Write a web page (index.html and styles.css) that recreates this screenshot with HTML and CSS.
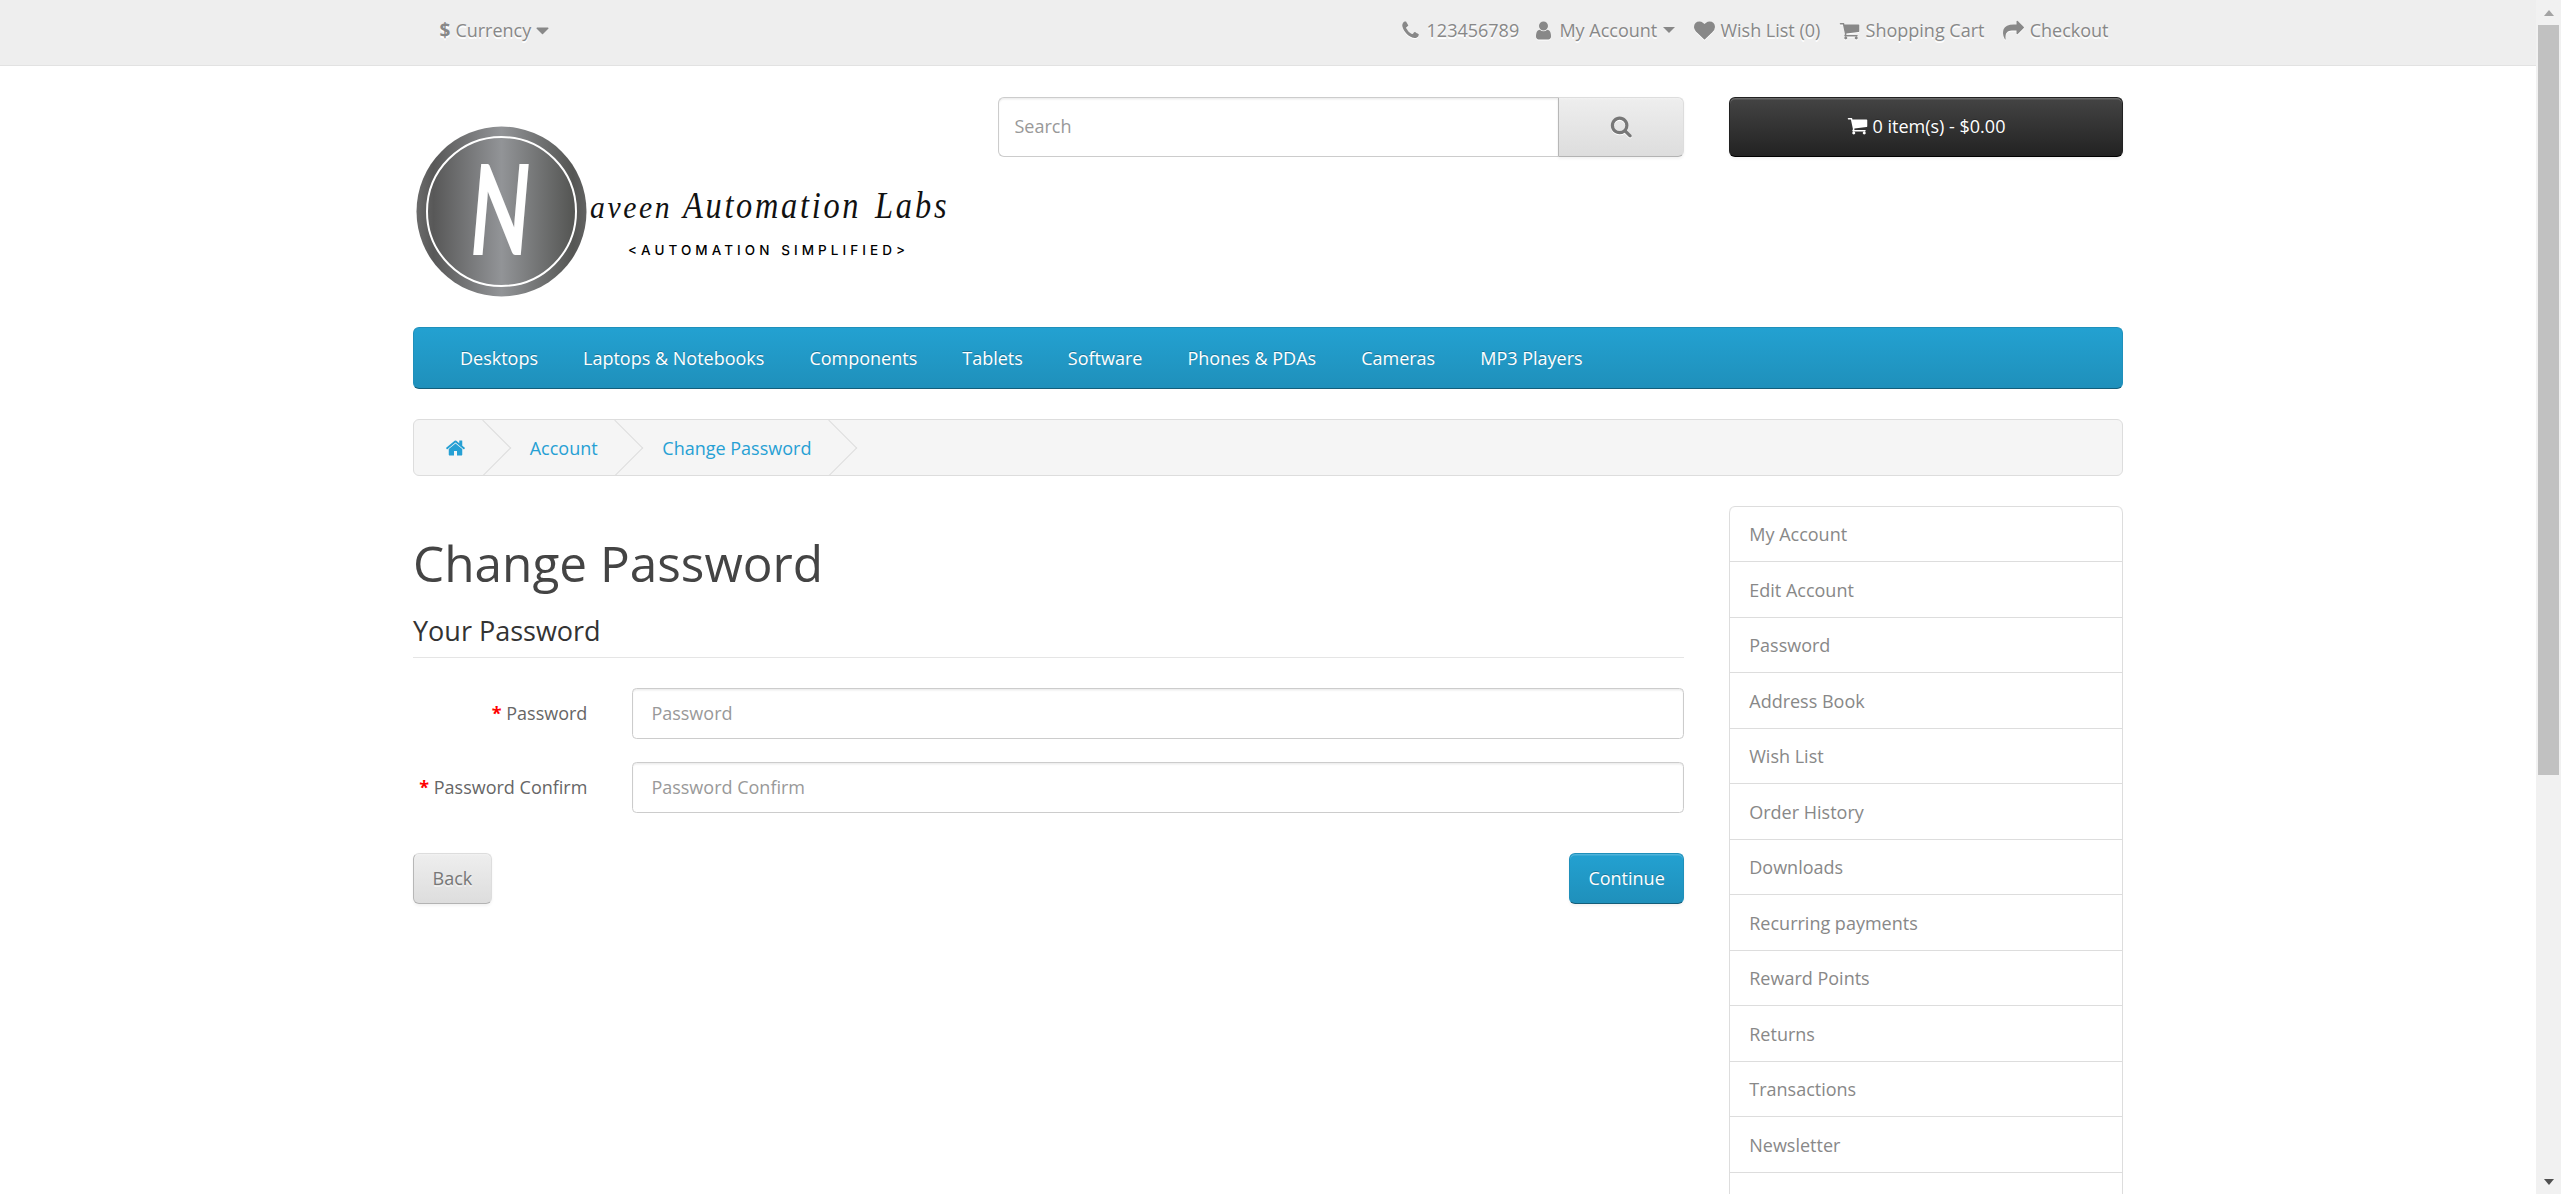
FILE: index.html
```html
<!DOCTYPE html>
<html lang="en">
<head>
<meta charset="utf-8">
<title>Change Password</title>
<link rel="stylesheet" href="styles.css">
</head>
<body>
<div class="page">
  <div class="viewport">
    <nav class="top">
      <div class="wrap top-inner">
        <div class="currency"><strong>$</strong> <span>Currency</span>
          <svg class="caret-fa" viewBox="0 0 1792 1792"><path d="M1408 704q0 26-19 45l-448 448q-19 19-45 19t-45-19l-448-448q-19-19-19-45t19-45 45-19h896q26 0 45 19t19 45z"/></svg>
        </div>
        <ul class="top-links">
          <li class="phone"><span class="ico"><svg viewBox="0 0 1792 1792"><path d="M1600 1240q0 27-10 70.5t-21 68.5q-21 50-122 106-94 51-186 51-27 0-53-3.5t-57.5-12.5-47-14.5-55.5-20.5-49-18q-98-35-175-83-127-79-264-216t-216-264q-48-77-83-175-3-9-18-49t-20.5-55.5-14.5-47-12.5-57.5-3.5-53q0-92 51-186 56-101 106-122 25-11 68.5-21t70.5-10q14 0 21 3 18 6 53 76 11 19 30 54t35 63.5 31 53.5q3 4 17.5 25t21.5 35.5 7 28.5q0 20-28.5 50t-62 55-62 53-28.5 46q0 9 5 22.5t8.5 20.5 14 24 11.5 19q76 137 174 235t235 174q2 1 19 11.5t24 14 20.5 8.5 22.5 5q18 0 46-28.5t53-62 55-62 50-28.5q14 0 28.5 7t35.5 21.5 25 17.5q25 15 53.5 31t63.5 35 54 30q70 35 76 53 3 7 3 21z"/></svg></span>123456789</li>
          <li><span class="ico"><svg viewBox="0 0 1792 1792"><path d="M1536 1399q0 109-62.5 187t-150.5 78h-854q-88 0-150.5-78t-62.5-187q0-85 8.5-160.5t31.5-152 58.5-131 94-89 134.5-34.5q131 128 313 128t313-128q76 0 134.5 34.5t94 89 58.5 131 31.5 152 8.5 160.5zm-256-887q0 159-112.5 271.5t-271.5 112.5-271.5-112.5-112.5-271.5 112.5-271.5 271.5-112.5 271.5 112.5 112.5 271.5z"/></svg></span>My Account<i class="caret"></i></li>
          <li><span class="ico"><svg viewBox="0 0 1792 1792"><path d="M896 1664q-26 0-44-18l-624-602q-10-8-27.5-26t-55.5-65.5-68-97.5-53.5-121-23.5-138q0-220 127-344t351-124q62 0 126.5 21.5t120 58 95.5 68.5 76 68q36-36 76-68t95.5-68.5 120-58 126.5-21.5q224 0 351 124t127 344q0 221-229 450l-623 600q-18 18-44 18z"/></svg></span>Wish List (0)</li>
          <li><span class="ico"><svg viewBox="0 0 1792 1792"><path d="M704 1536q0 52-38 90t-90 38-90-38-38-90 38-90 90-38 90 38 38 90zm896 0q0 52-38 90t-90 38-90-38-38-90 38-90 90-38 90 38 38 90zm128-1088v512q0 24-16.5 42.5t-40.5 21.5l-1044 122q13 60 13 70 0 16-24 64h920q26 0 45 19t19 45-19 45-45 19h-1024q-26 0-45-19t-19-45q0-11 8-31.5t16-36 21.5-40 15.5-29.5l-177-823h-204q-26 0-45-19t-19-45 19-45 45-19h256q16 0 28.5 6.5t19.5 15.5 13 24.5 8 26 5.5 29.5 4.5 26h1201q26 0 45 19t19 45z"/></svg></span>Shopping Cart</li>
          <li><span class="ico"><svg viewBox="0 0 1792 1792"><path d="M1792 640q0 26-19 45l-512 512q-19 19-45 19t-45-19-19-45v-256h-224q-98 0-175.5 6t-154 21.5-133 42.5-105.5 69.5-80 101-48.5 138.5-17.5 181q0 55 5 123 0 6 2.5 23.5t2.5 26.5q0 15-8.5 25t-23.5 10q-16 0-28-17-7-9-13-22t-13.5-30-10.5-24q-127-285-127-451 0-199 53-333 162-403 875-403h224v-256q0-26 19-45t45-19 45 19l512 512q19 19 19 45z"/></svg></span>Checkout</li>
        </ul>
      </div>
    </nav>

    <header class="wrap header">
      <svg class="logo" viewBox="0 0 540 215" role="img" aria-label="Naveen Automation Labs">
        <defs>
          <linearGradient id="metal" x1="0" x2="1" y1="0" y2="0">
            <stop offset="0" stop-color="#6b6b6b"/>
            <stop offset="0.1" stop-color="#585858"/>
            <stop offset="0.5" stop-color="#929497"/>
            <stop offset="0.92" stop-color="#555654"/>
            <stop offset="1" stop-color="#626262"/>
          </linearGradient>
        </defs>
        <circle cx="88.5" cy="115.5" r="85" fill="url(#metal)"/>
        <circle cx="88.5" cy="115.5" r="74.5" fill="none" stroke="#fff" stroke-width="2"/>
        <text class="logo-n" transform="translate(70 159) skewX(-5)" textLength="60" lengthAdjust="spacingAndGlyphs" x="-16">N</text>
        <text class="logo-script" transform="translate(177 122) scale(1.35 1.45)" textLength="59" lengthAdjust="spacing">aveen</text>
        <text class="logo-script logo-tall" transform="translate(270 122) scale(1.35 1.6)" textLength="130" lengthAdjust="spacing">Automation</text>
        <text class="logo-script logo-tall" transform="translate(462 122) scale(1.35 1.6)" textLength="53" lengthAdjust="spacing">Labs</text>
        <text class="logo-sub" x="215" y="159" textLength="277" lengthAdjust="spacing">&lt;AUTOMATION SIMPLIFIED&gt;</text>
      </svg>
      <div class="search">
        <input class="search-input" type="text" placeholder="Search">
        <button class="btn btn-default search-btn" type="button"><svg viewBox="0 0 1792 1792"><path d="M1216 832q0-185-131.5-316.5t-316.5-131.5-316.5 131.5-131.5 316.5 131.5 316.5 316.5 131.5 316.5-131.5 131.5-316.5zm512 832q0 52-38 90t-90 38q-54 0-90-38l-343-342q-179 124-399 124-143 0-273.5-55.5t-225-150-150-225-55.5-273.5 55.5-273.5 150-225 225-150 273.5-55.5 273.5 55.5 225 150 150 225 55.5 273.5q0 220-124 399l343 343q37 37 37 90z"/></svg></button>
      </div>
      <button class="btn btn-inverse cart" type="button"><svg viewBox="0 0 1792 1792"><path d="M704 1536q0 52-38 90t-90 38-90-38-38-90 38-90 90-38 90 38 38 90zm896 0q0 52-38 90t-90 38-90-38-38-90 38-90 90-38 90 38 38 90zm128-1088v512q0 24-16.5 42.5t-40.5 21.5l-1044 122q13 60 13 70 0 16-24 64h920q26 0 45 19t19 45-19 45-45 19h-1024q-26 0-45-19t-19-45q0-11 8-31.5t16-36 21.5-40 15.5-29.5l-177-823h-204q-26 0-45-19t-19-45 19-45 45-19h256q16 0 28.5 6.5t19.5 15.5 13 24.5 8 26 5.5 29.5 4.5 26h1201q26 0 45 19t19 45z"/></svg>0 item(s) - $0.00</button>
    </header>

    <nav class="wrap menu">
      <a href="#">Desktops</a>
      <a href="#">Laptops &amp; Notebooks</a>
      <a href="#">Components</a>
      <a href="#">Tablets</a>
      <a href="#">Software</a>
      <a href="#">Phones &amp; PDAs</a>
      <a href="#">Cameras</a>
      <a href="#">MP3 Players</a>
    </nav>

    <ul class="wrap breadcrumb">
      <li><a href="#" aria-label="Home"><svg class="home" viewBox="0 0 1792 1792"><path d="M1472 992v480q0 26-19 45t-45 19h-384v-384h-256v384h-384q-26 0-45-19t-19-45v-480q0-1 .5-3t.5-3l575-474 575 474q1 2 1 6zm223-69l-62 74q-8 9-21 11h-3q-13 0-21-7l-692-577-692 577q-12 8-24 7-13-2-21-11l-62-74q-8-10-7-23.5t11-21.5l719-599q32-26 76-26t76 26l244 204v-195q0-14 9-23t23-9h192q14 0 23 9t9 23v408l219 182q10 8 11 21.5t-7 23.5z"/></svg></a></li>
      <li><a href="#">Account</a></li>
      <li><a href="#">Change Password</a></li>
    </ul>

    <main class="wrap main">
      <section class="content">
        <h1>Change Password</h1>
        <form>
          <div class="legend">Your Password</div>
          <div class="form-group">
            <label class="control-label" for="pw">Password</label>
            <input class="form-control" id="pw" type="password" placeholder="Password">
          </div>
          <div class="form-group">
            <label class="control-label" for="pwc">Password Confirm</label>
            <input class="form-control" id="pwc" type="password" placeholder="Password Confirm">
          </div>
          <div class="buttons">
            <a class="btn btn-default" href="#">Back</a>
            <button class="btn btn-primary" type="button">Continue</button>
          </div>
        </form>
      </section>
      <aside class="list-group">
        <a href="#">My Account</a>
        <a href="#">Edit Account</a>
        <a href="#">Password</a>
        <a href="#">Address Book</a>
        <a href="#">Wish List</a>
        <a href="#">Order History</a>
        <a href="#">Downloads</a>
        <a href="#">Recurring payments</a>
        <a href="#">Reward Points</a>
        <a href="#">Returns</a>
        <a href="#">Transactions</a>
        <a href="#">Newsletter</a>
        <a class="list-blank" href="#" aria-label="Logout"></a>
      </aside>
    </main>
  </div>
  <div class="scrollbar" aria-hidden="true">
    <div class="sb-btn"><i class="sb-up"></i></div>
    <div class="sb-thumb"></div>
    <div class="sb-track"></div>
    <div class="sb-btn"><i class="sb-down"></i></div>
  </div>
</div>
</body>
</html>
```

FILE: styles.css
```css
* { box-sizing: border-box; }
html, body { margin: 0; height: 100%; overflow: hidden; }
body {
  font-family: "Open Sans", sans-serif;
  font-size: 18px;
  line-height: 30px;
  color: #666;
  background: #fff;
}
a { color: #26a0d4; text-decoration: none; }
ul { list-style: none; margin: 0; padding: 0; }

.page { display: flex; height: 1194px; }
.viewport { flex: 1; min-width: 0; overflow: hidden; }
.wrap { width: 1710px; margin-left: auto; margin-right: auto; }

/* top bar */
.top {
  height: 66px;
  background: #eee;
  border-bottom: 1px solid #e2e2e2;
  margin-bottom: 30.5px;
}
.top-inner {
  height: 65px;
  display: flex;
  align-items: center;
  justify-content: space-between;
  padding: 0 14.5px 5px 26.5px;
  color: #888;
  text-shadow: 0 1.5px 0 #fff;
}
.currency { display: flex; align-items: center; white-space: pre; }
.currency strong { font-size: 19px; }
.currency span { margin-left: 5px; }
.caret-fa { width: 21px; height: 21px; fill: #888; margin-left: 1px; }
.top-links { display: flex; gap: 18px; }
.top-links li { display: flex; align-items: center; white-space: nowrap; }
.top-links .phone { margin-right: -5px; }
.ico { display: flex; justify-content: center; width: 22.5px; margin-right: 4.68px; }
.ico svg { width: 21px; height: 21px; fill: #888; filter: drop-shadow(0 1px 0 #fff); }
.caret {
  width: 0; height: 0;
  margin-left: 6px;
  border-top: 6px solid #888;
  border-left: 6px solid transparent;
  border-right: 6px solid transparent;
}

/* header */
.header {
  display: grid;
  grid-template-columns: 540px 686.25px 393.75px;
  column-gap: 45px;
  align-items: start;
  height: 230px;
}
.logo { display: block; width: 540px; height: 215px; margin-top: -0.5px; }
.logo-n { font-family: "Lato", sans-serif; font-weight: 700; font-size: 126px; fill: #fff; }
.logo-script { font-family: "Liberation Serif", serif; font-style: italic; font-size: 22px; fill: #111; }
.logo-tall { font-size: 24px; }
.logo-sub { font-family: "Inter", sans-serif; font-weight: 500; font-size: 13.5px; fill: #000; }

.search { display: flex; height: 60px; }
.search-input {
  flex: 1; min-width: 0;
  height: 60px;
  padding: 0 15px 2px 15.5px;
  font: 18px/30px "Open Sans", sans-serif;
  color: #555;
  border: 1px solid #ccc;
  border-right: 0;
  border-radius: 6px 0 0 6px;
  box-shadow: inset 0 1.5px 1.5px rgba(0,0,0,.075);
  outline: 0;
}
input::placeholder { color: #999; opacity: 1; }

.btn {
  display: inline-flex;
  align-items: center;
  justify-content: center;
  height: 51px;
  padding: 0 18.5px;
  font: 18px/26px "Open Sans", sans-serif;
  border: 1px solid #ccc;
  border-radius: 6px;
  box-shadow: inset 0 1.5px 0 rgba(255,255,255,.2), 0 1.5px 3px rgba(0,0,0,.05);
}
.btn-default {
  color: #777;
  text-shadow: 0 1.5px 0 rgba(255,255,255,.5);
  background: linear-gradient(to bottom, #eee, #ddd);
  border-color: #ddd #ddd #b3b3b3 #b7b7b7;
}
.btn-primary {
  color: #fff;
  text-shadow: 0 -1.5px 0 rgba(0,0,0,.25);
  background: linear-gradient(to bottom, #23a1d1, #1f90bb);
  border-color: #1f90bb #1f90bb #145e7a;
}
.btn-inverse {
  color: #fff;
  text-shadow: 0 -1.5px 0 rgba(0,0,0,.25);
  background: linear-gradient(to bottom, #444, #222);
  border-color: #222 #222 #000;
}
.search-btn {
  width: 126.5px;
  height: 60px;
  padding: 0;
  border-radius: 0 6px 6px 0;
}
.search-btn svg { width: 22.5px; height: 22.5px; fill: #777; filter: drop-shadow(0 1px 0 #fff); }
.cart { width: 100%; height: 60px; padding-bottom: 2px; }
.cart svg { width: 21px; height: 21px; fill: #fff; margin-right: 4.68px; }

/* menu */
.menu {
  display: flex;
  height: 62.5px;
  padding-left: 23.5px;
  margin-bottom: 30px;
  background: linear-gradient(to bottom, #23a1d1, #1f90bb);
  border: 1px solid;
  border-color: #1f90bb #1f90bb #145e7a;
  border-radius: 6px;
}
.menu a {
  padding: 15px 22.5px;
  color: #fff;
  text-shadow: 0 -1.5px 0 rgba(0,0,0,.25);
  white-space: nowrap;
}

/* breadcrumb */
.breadcrumb {
  display: flex;
  gap: 4.68px;
  height: 56.5px;
  padding: 13px 0 11px;
  margin-bottom: 30px;
  background: #f5f5f5;
  border: 1px solid #ddd;
  border-radius: 6px;
  overflow: hidden;
}
.breadcrumb li { position: relative; padding: 0 30px; white-space: nowrap; }
.breadcrumb li::after {
  content: "";
  position: absolute;
  top: -5.5px;
  right: -7.5px;
  width: 39px;
  height: 39px;
  border-right: 1px solid #ddd;
  border-bottom: 1px solid #ddd;
  transform: rotate(-45deg);
}
.breadcrumb li:first-child { padding-left: 31px; padding-right: 29px; }
.home { display: block; width: 21px; height: 30px; fill: #26a0d4; }

/* main */
.main {
  display: grid;
  grid-template-columns: 1271.25px 393.75px;
  column-gap: 45px;
  align-items: start;
}
h1 {
  margin: 30px 0 16px;
  font-size: 49.5px;
  font-weight: 400;
  line-height: 54.45px;
  color: #444;
}
.legend {
  padding: 10.5px 0;
  margin-bottom: 30px;
  font-size: 27px;
  line-height: 30px;
  color: #333;
  border-bottom: 1px solid #e5e5e5;
}
.form-group {
  display: grid;
  grid-template-columns: 174.375px 1051.875px;
  column-gap: 45px;
  margin-bottom: 23px;
}
.control-label { padding-top: 10.5px; text-align: right; }
.control-label::before { content: "* "; color: #f00; font-weight: 700; }
.form-control {
  width: 100%;
  height: 51px;
  padding: 9px 18px;
  font: 18px/26px "Open Sans", sans-serif;
  color: #555;
  background: #fff;
  border: 1px solid #ccc;
  border-radius: 4.5px;
  box-shadow: inset 0 1.5px 1.5px rgba(0,0,0,.075);
  outline: 0;
}
.buttons { display: flex; justify-content: space-between; margin: 40px 0 18px; }

/* sidebar */
.list-group { display: flex; flex-direction: column; border-top: 1px solid #ddd; border-radius: 6px 6px 0 0; }
.list-group a {
  display: block;
  height: 55.5px;
  padding: 12.5px 18px 0 19px;
  color: #888;
  background: #fff;
  border: solid #ddd;
  border-width: 0 1px 1px;
}
.list-group a:first-child { border-radius: 6px 6px 0 0; }

/* scrollbar */
.scrollbar {
  flex: none;
  width: 25px;
  display: flex;
  flex-direction: column;
  background: #f1f1f1;
}
.sb-btn { flex: none; height: 25px; display: flex; align-items: center; justify-content: center; }
.sb-thumb { flex: none; height: 750px; margin: 0 2px; background: #c1c1c1; }
.sb-track { flex: 1; }
.sb-up { border-bottom: 6px solid #a3a3a3; border-left: 5.5px solid transparent; border-right: 5.5px solid transparent; }
.sb-down { border-top: 6px solid #505050; border-left: 5.5px solid transparent; border-right: 5.5px solid transparent; }
```
